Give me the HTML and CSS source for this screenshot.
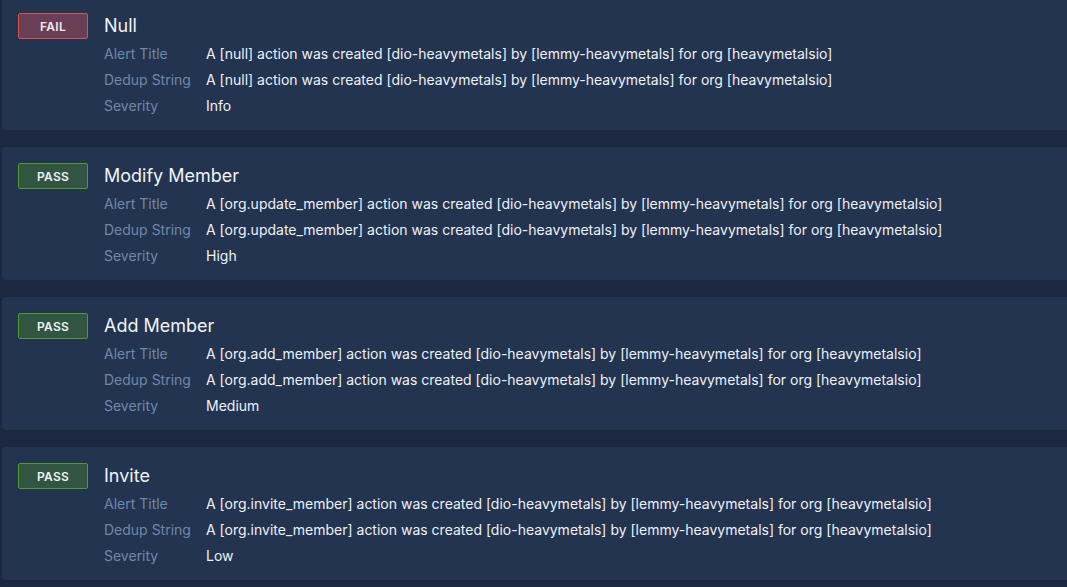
FILE: index.html
```html
<!DOCTYPE html>
<html>
<head>
<meta charset="utf-8">
<link rel="stylesheet" href="styles.css">
</head>
<body>
<div class="list">
  <section class="card">
    <div class="badge fail">FAIL</div>
    <div class="body">
      <h2 class="title">Null</h2>
      <div class="row"><span class="label">Alert Title</span><span class="value">A [null] action was created [dio-heavymetals] by [lemmy-heavymetals] for org [heavymetalsio]</span></div>
      <div class="row"><span class="label">Dedup String</span><span class="value">A [null] action was created [dio-heavymetals] by [lemmy-heavymetals] for org [heavymetalsio]</span></div>
      <div class="row"><span class="label">Severity</span><span class="value">Info</span></div>
    </div>
  </section>
  <section class="card">
    <div class="badge pass">PASS</div>
    <div class="body">
      <h2 class="title">Modify Member</h2>
      <div class="row"><span class="label">Alert Title</span><span class="value">A [org.update_member] action was created [dio-heavymetals] by [lemmy-heavymetals] for org [heavymetalsio]</span></div>
      <div class="row"><span class="label">Dedup String</span><span class="value">A [org.update_member] action was created [dio-heavymetals] by [lemmy-heavymetals] for org [heavymetalsio]</span></div>
      <div class="row"><span class="label">Severity</span><span class="value">High</span></div>
    </div>
  </section>
  <section class="card">
    <div class="badge pass">PASS</div>
    <div class="body">
      <h2 class="title">Add Member</h2>
      <div class="row"><span class="label">Alert Title</span><span class="value">A [org.add_member] action was created [dio-heavymetals] by [lemmy-heavymetals] for org [heavymetalsio]</span></div>
      <div class="row"><span class="label">Dedup String</span><span class="value">A [org.add_member] action was created [dio-heavymetals] by [lemmy-heavymetals] for org [heavymetalsio]</span></div>
      <div class="row"><span class="label">Severity</span><span class="value">Medium</span></div>
    </div>
  </section>
  <section class="card">
    <div class="badge pass">PASS</div>
    <div class="body">
      <h2 class="title">Invite</h2>
      <div class="row"><span class="label">Alert Title</span><span class="value">A [org.invite_member] action was created [dio-heavymetals] by [lemmy-heavymetals] for org [heavymetalsio]</span></div>
      <div class="row"><span class="label">Dedup String</span><span class="value">A [org.invite_member] action was created [dio-heavymetals] by [lemmy-heavymetals] for org [heavymetalsio]</span></div>
      <div class="row"><span class="label">Severity</span><span class="value">Low</span></div>
    </div>
  </section>
</div>
</body>
</html>
```
FILE: styles.css
```css
html, body {
  margin: 0;
  padding: 0;
  background: #1c2840;
  font-family: "Inter", "Liberation Sans", sans-serif;
  overflow: hidden;
}
.list {
  display: flex;
  flex-direction: column;
  gap: 17px;
  margin-top: -3px;
  padding-left: 2px;
}
.card {
  background: #233451;
  border-radius: 4px 0 0 4px;
  height: 133px;
  box-sizing: border-box;
  padding: 16px 0 0 16px;
  display: flex;
  gap: 16px;
}
.badge {
  width: 70px;
  height: 26px;
  box-sizing: border-box;
  border: 1px solid;
  border-radius: 2px;
  display: flex;
  align-items: center;
  justify-content: center;
  font-size: 12px;
  font-weight: 600;
  letter-spacing: 0.3px;
  color: #eef0f4;
  flex: none;
}
.badge.fail {
  background: #6a3f55;
  border-color: #d2534f;
}
.badge.pass {
  background: #315541;
  border-color: #4f9b2b;
}
.title {
  margin: 0;
  font-size: 18px;
  font-weight: 400;
  color: #f1f3f7;
  line-height: 26px;
  height: 26px;
}
.body {
  display: flex;
  flex-direction: column;
}
.row {
  display: flex;
  height: 26px;
  align-items: center;
  font-size: 14px;
}
.row:first-of-type {
  margin-top: 1px;
}
.label {
  width: 102px;
  color: #6f88aa;
  flex: none;
}
.value {
  color: #eef1f5;
  white-space: nowrap;
}
```
